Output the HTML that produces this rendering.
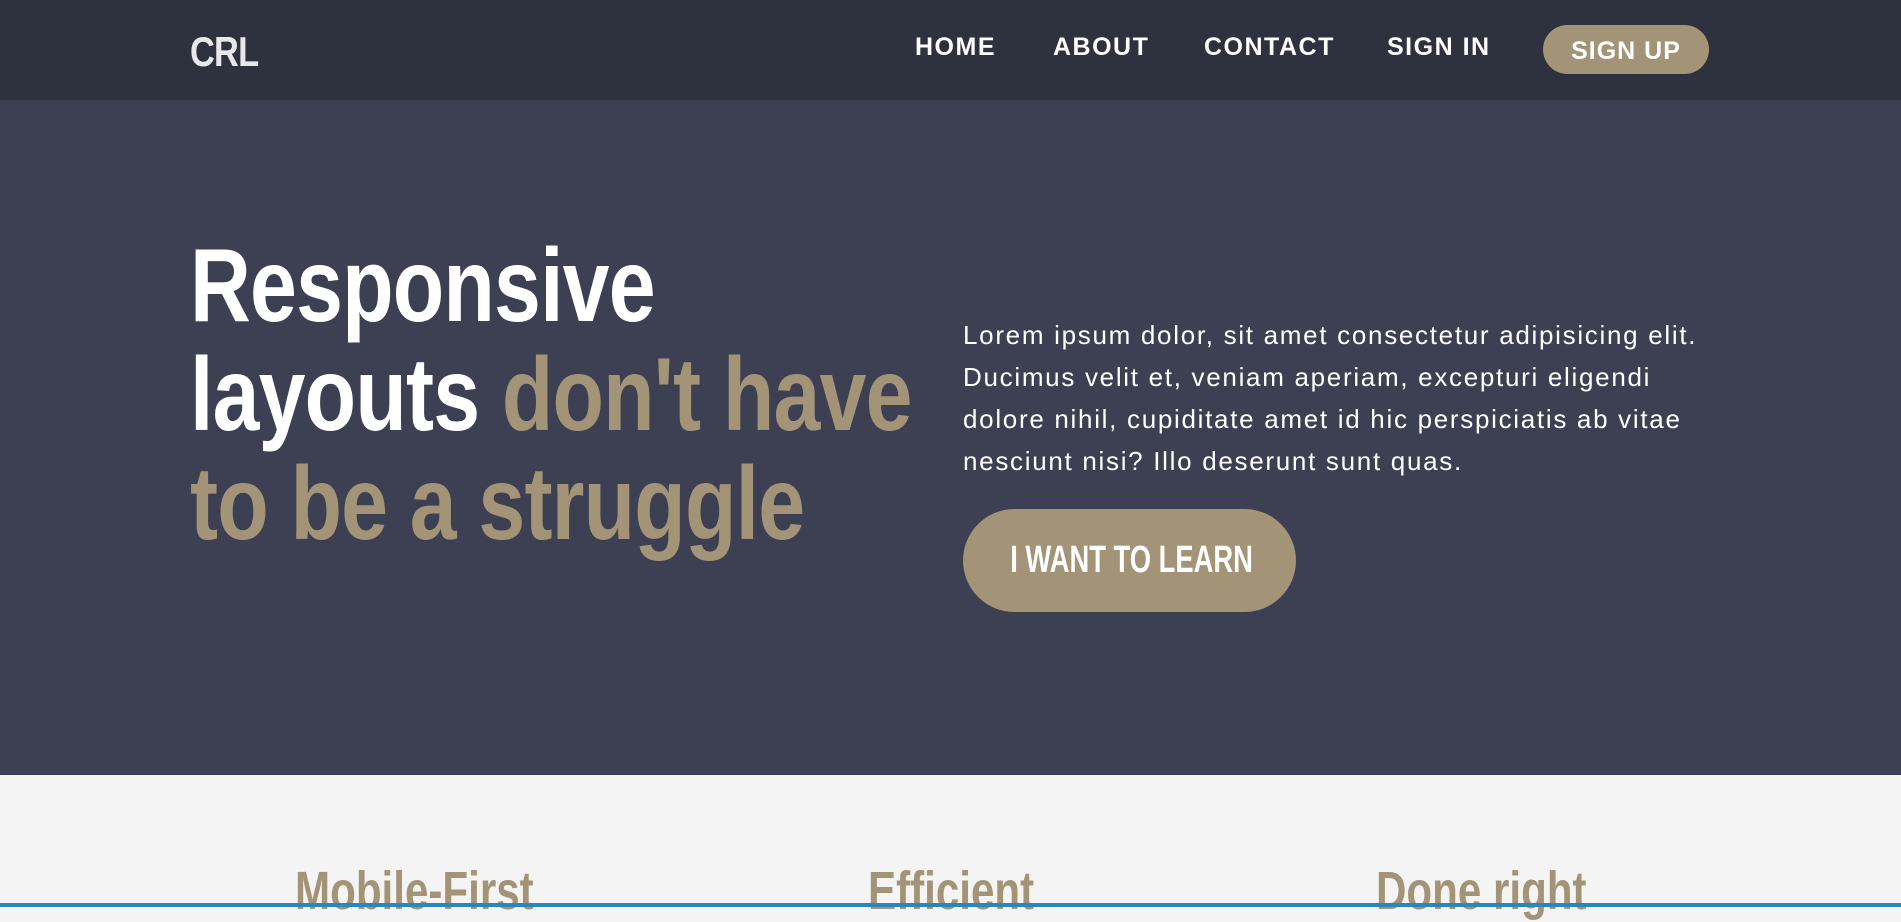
<!DOCTYPE html>
<html><head><meta charset="utf-8"><style>
*{margin:0;padding:0;box-sizing:border-box}
body{width:1901px;height:907px;overflow:hidden;position:relative;background:#f4f4f4;font-family:"Liberation Sans",sans-serif}
.nav{position:absolute;left:0;top:0;width:1901px;height:100px;background:#2e313e}
.hero{position:absolute;left:0;top:100px;width:1901px;height:675px;background:#3c4052}
.logo{position:absolute;left:190px;top:28px;color:#e8e8ec;font:bold 42px "Liberation Sans",sans-serif;letter-spacing:-1px;transform:scaleX(0.82);transform-origin:left}
.nl{position:absolute;top:33px;color:#fff;font-weight:bold;font-size:25px;letter-spacing:1.5px}
.su{position:absolute;left:1543px;top:25px;width:166px;height:49px;border-radius:25px;background:#a39477;color:#fff;font-weight:bold;font-size:25px;letter-spacing:1px;text-align:center;line-height:52px}
h1{position:absolute;left:190px;top:232px;font-family:"Liberation Sans",sans-serif;font-weight:bold;font-size:104px;line-height:109px;color:#fff;transform:scaleX(0.81);transform-origin:left;white-space:nowrap;letter-spacing:-1px}
h1 span{color:#a39477}
p{position:absolute;left:963px;top:314px;width:760px;color:#fff;font-size:26px;letter-spacing:1.7px;line-height:42px}
.btn{position:absolute;left:963px;top:509px;width:333px;height:103px;border-radius:52px;background:#a39477;color:#fff;text-align:center;line-height:103px;font-weight:bold;font-size:38px;white-space:nowrap}
.btn span{display:inline-block;transform:scaleX(0.72)}
.f{position:absolute;top:860px;color:#a39477;font-weight:bold;font-size:54px;transform:scaleX(0.78);transform-origin:left;white-space:nowrap}
.bar{position:absolute;left:0;top:903px;width:1901px;height:4px;background:#2a87bb}
</style></head><body>
<div class="nav"></div>
<div class="hero"></div>
<div class="logo">CRL</div>
<div class="nl" style="left:915px">HOME</div>
<div class="nl" style="left:1053px">ABOUT</div>
<div class="nl" style="left:1204px">CONTACT</div>
<div class="nl" style="left:1387px">SIGN IN</div>
<div class="su">SIGN UP</div>
<h1>Responsive<br>layouts <span>don't have</span><br><span>to be a struggle</span></h1>
<p>Lorem ipsum dolor, sit amet consectetur adipisicing elit. Ducimus velit et, veniam aperiam, excepturi eligendi dolore nihil, cupiditate amet id hic perspiciatis ab vitae nesciunt nisi? Illo deserunt sunt quas.</p>
<div class="btn"><span>I WANT TO LEARN</span></div>
<div class="f" style="left:295px">Mobile-First</div>
<div class="f" style="left:868px">Efficient</div>
<div class="f" style="left:1376px">Done right</div>
<div class="bar"></div>
</body></html>
